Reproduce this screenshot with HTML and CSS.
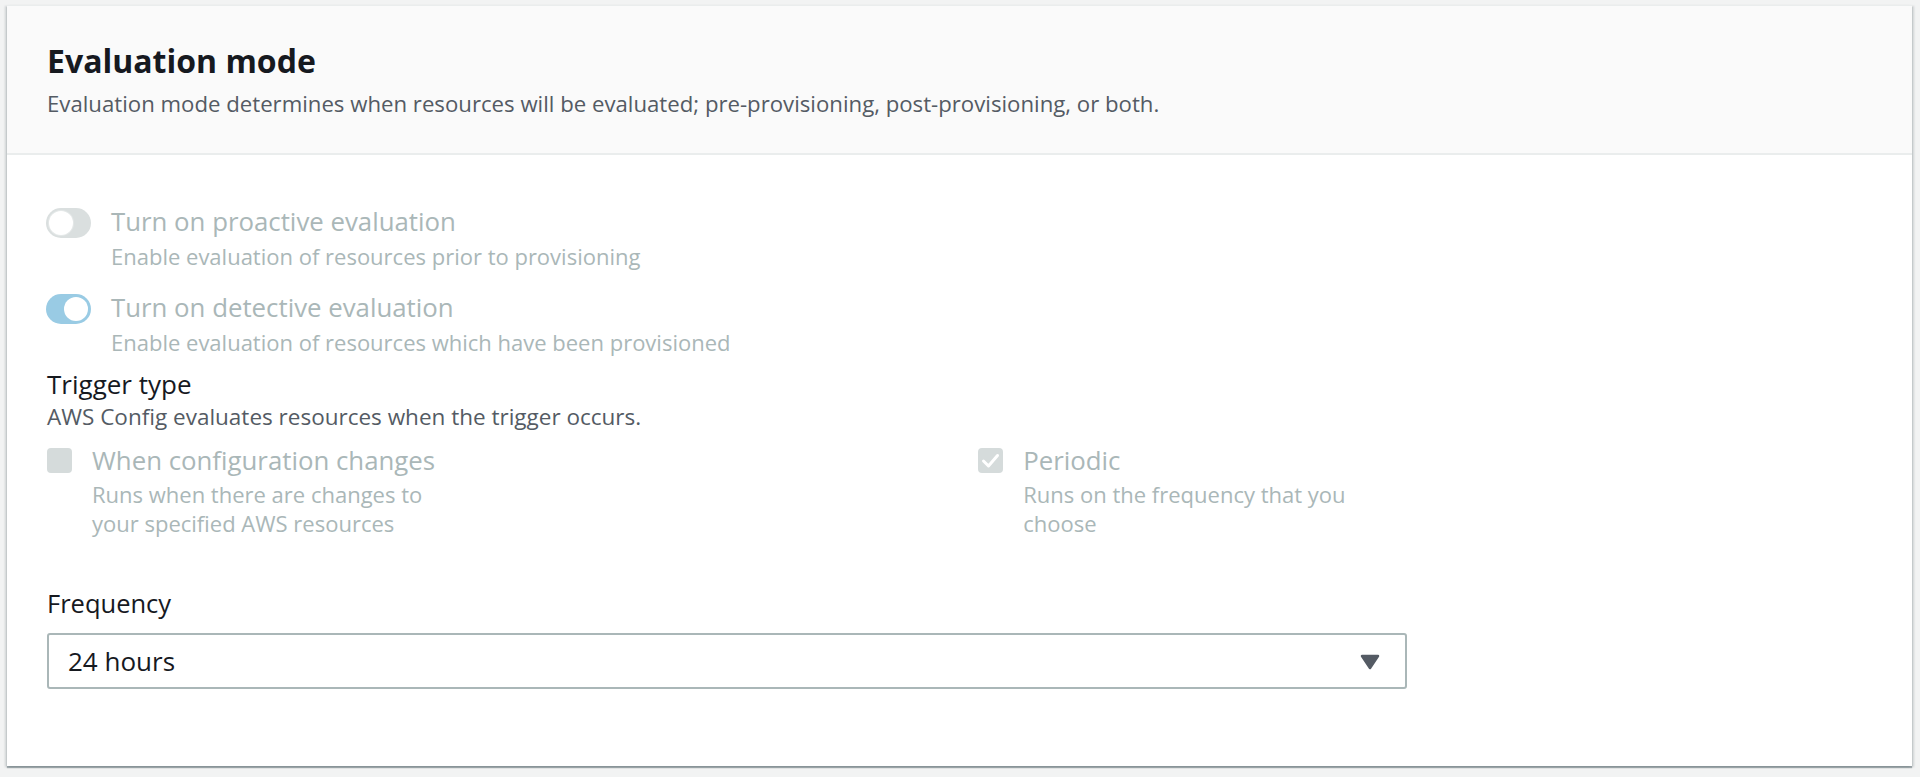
FILE: index.html
```html
<!DOCTYPE html>
<html lang="en">
<head>
<meta charset="utf-8">
<title>Evaluation mode</title>
<link rel="stylesheet" href="styles.css">
</head>
<body>
<div class="card">
  <div class="card-header">
    <h2 class="title">Evaluation mode</h2>
    <p class="header-desc">Evaluation mode determines when resources will be evaluated; pre-provisioning, post-provisioning, or both.</p>
  </div>
  <div class="card-body">
    <div class="toggle-row">
      <span class="toggle toggle-off"><span class="knob"></span></span>
      <div class="toggle-text">
        <div class="opt-label">Turn on proactive evaluation</div>
        <div class="opt-desc">Enable evaluation of resources prior to provisioning</div>
      </div>
    </div>
    <div class="toggle-row second">
      <span class="toggle toggle-on"><span class="knob"></span></span>
      <div class="toggle-text">
        <div class="opt-label">Turn on detective evaluation</div>
        <div class="opt-desc">Enable evaluation of resources which have been provisioned</div>
      </div>
    </div>

    <div class="field-label trigger-label">Trigger type</div>
    <div class="field-desc">AWS Config evaluates resources when the trigger occurs.</div>

    <div class="check-grid">
      <div class="check-item">
        <span class="checkbox"></span>
        <div class="check-text">
          <div class="opt-label">When configuration changes</div>
          <div class="check-desc">Runs when there are changes to your specified AWS resources</div>
        </div>
      </div>
      <div class="check-item">
        <span class="checkbox checked">
          <svg viewBox="0 0 25 25" width="25" height="25"><polyline points="5.5,13 10.5,18 19.5,7.5" fill="none" stroke="#ffffff" stroke-width="3" stroke-linecap="round" stroke-linejoin="round"/></svg>
        </span>
        <div class="check-text">
          <div class="opt-label">Periodic</div>
          <div class="check-desc">Runs on the frequency that you choose</div>
        </div>
      </div>
    </div>

    <div class="field-label freq-label">Frequency</div>
    <div class="select">
      <span class="select-value">24 hours</span>
      <svg class="caret" viewBox="0 0 20 16" width="20" height="16"><path d="M2 2 H18 L10 14 Z" fill="#545b64" stroke="#545b64" stroke-width="2.5" stroke-linejoin="round"/></svg>
    </div>
  </div>
</div>
</body>
</html>
```
FILE: styles.css
```css
html, body {
  margin: 0;
  padding: 0;
}
body {
  background: #f2f3f3;
  font-family: "Open Sans", "Noto Sans", "Liberation Sans", sans-serif;
  color: #16191f;
  padding: 5px 8px 11px 7px;
}
.card {
  background: #ffffff;
  box-shadow: 0 2px 1px 0 rgba(0, 28, 36, 0.3), 2px 1px 2px 0 rgba(0, 28, 36, 0.15), -2px 1px 2px 0 rgba(0, 28, 36, 0.15);
  border-top: 1px solid #eaeded;
}
.card-header {
  background: #fafafa;
  border-bottom: 2px solid #eaeded;
  padding: 34.6px 40px 34.7px 40px;
}
.title {
  margin: 0;
  font-size: 32px;
  line-height: 40px;
  font-weight: 700;
  color: #16191f;
}
.header-desc {
  margin: 8px 0 0 0;
  font-size: 22.2px;
  line-height: 30px;
  color: #545b64;
}
.card-body {
  padding: 48px 40px 77px 40px;
}
.toggle-row {
  display: flex;
  gap: 20px;
  margin-left: -1px;
}
.toggle-row.second {
  margin-top: 18.6px;
}
.toggle {
  flex: none;
  width: 45px;
  height: 30px;
  border-radius: 15px;
  margin-top: 5px;
  position: relative;
  box-sizing: border-box;
}
.toggle-off {
  background: #dadfdf;
}
.toggle-on {
  background: #99cbe4;
}
.knob {
  position: absolute;
  top: 3px;
  width: 24px;
  height: 24px;
  border-radius: 50%;
  background: #ffffff;
}
.toggle-off .knob {
  left: 3px;
  box-shadow: 0 0 0 1px #e4e8e8;
}
.toggle-on .knob {
  right: 3px;
}
.opt-label {
  font-size: 25.8px;
  line-height: 37.5px;
  color: #aab7b8;
}
.opt-desc {
  font-size: 22px;
  line-height: 30px;
  color: #aab7b8;
}
.field-label {
  font-size: 26px;
  line-height: 36px;
  color: #16191f;
}
.trigger-label {
  margin-top: 9.2px;
}
.field-desc {
  font-size: 22.5px;
  line-height: 30px;
  color: #545b64;
}
.check-grid {
  display: grid;
  grid-template-columns: 1fr 1fr;
  column-gap: 37.5px;
  margin-top: 10px;
}
.check-item {
  display: flex;
  gap: 20px;
}
.checkbox {
  flex: none;
  width: 25px;
  height: 25px;
  margin-top: 6px;
  border-radius: 4px;
  background: #d5dbdb;
  display: flex;
}
.check-text {
  max-width: 370px;
}
.check-desc {
  font-size: 22px;
  line-height: 29px;
  color: #aab7b8;
}
.freq-label {
  font-size: 25.5px;
  margin-top: 47.2px;
}
.select {
  margin-top: 12.2px;
  width: 1360px;
  height: 56px;
  box-sizing: border-box;
  border: 2px solid #aab7b8;
  border-radius: 3px;
  display: flex;
  align-items: center;
  justify-content: space-between;
  padding: 0 25px 0 19px;
}
.select-value {
  font-size: 26px;
  line-height: 30px;
  color: #16191f;
}
.caret {
  display: block;
  margin-top: 2px;
}
```
